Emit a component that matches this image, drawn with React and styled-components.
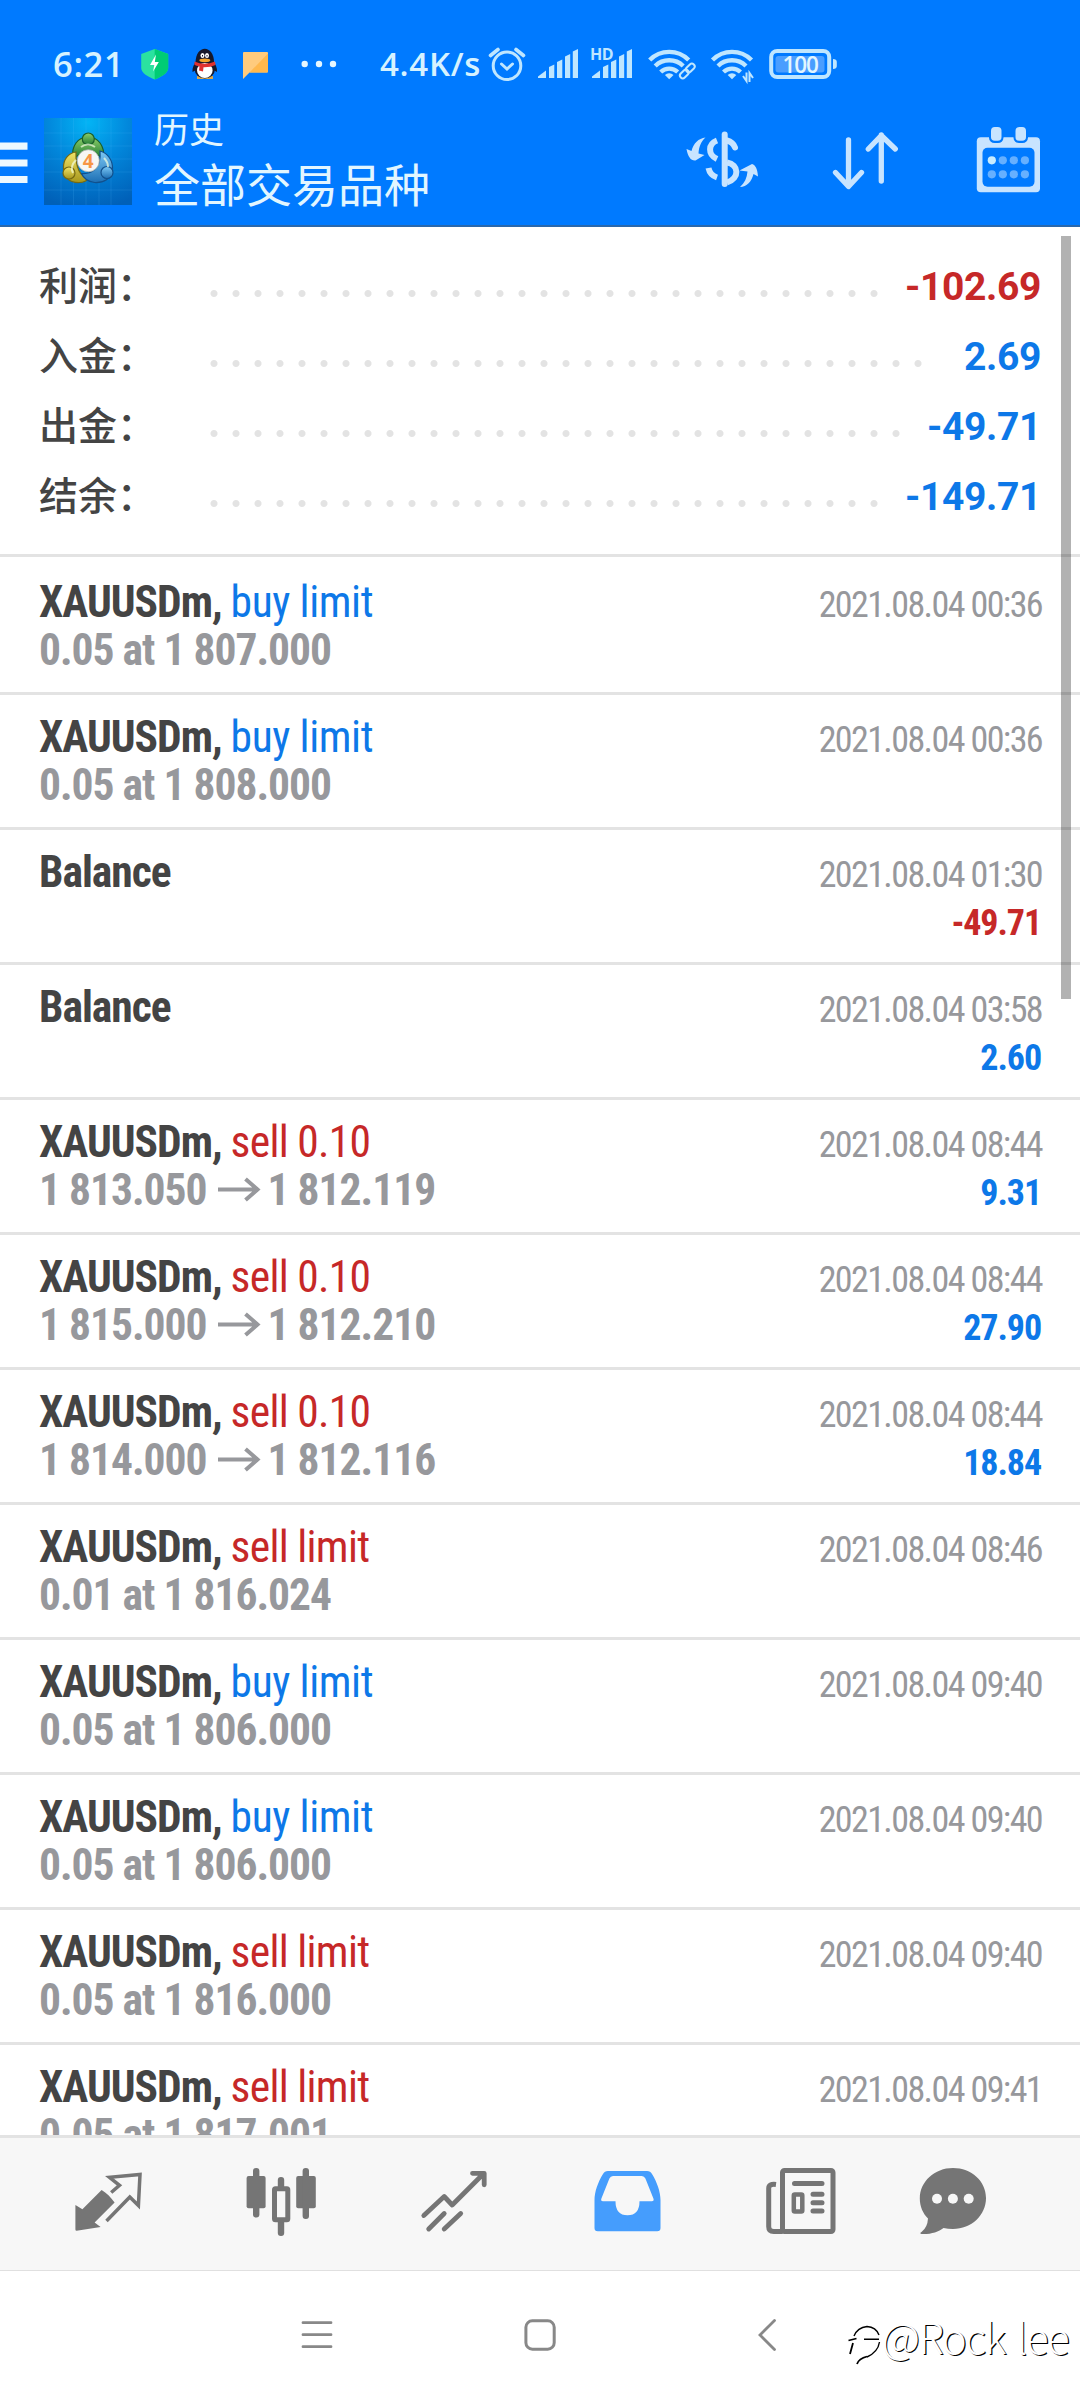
import React from 'react';
import styled, { createGlobalStyle } from 'styled-components';

const GlobalStyle = createGlobalStyle`
  body {
    margin: 0;
    background: #fff;
  }
`;

const colors = {
  blue: '#0d78e8',
  red: '#c62828',
  dark: '#444',
  gray: '#97989c',
  line: '#e3e3e3',
};

const Screen = styled.div`
  position: relative;
  display: flex;
  flex-direction: column;
  width: 1080px;
  height: 2400px;
  overflow: hidden;
  font-family: "Roboto Condensed", Roboto, "Noto Sans CJK SC", sans-serif;
  background: #fff;
`;

const Header = styled.header`
  flex: none;
  box-sizing: border-box;
  height: 227px;
  color: #e2f6ff;
  background: #007aff;
  border-bottom: 2px solid #2a68ac;
`;

const StatusBar = styled.div`
  display: flex;
  height: 100px;
  padding-left: 53px;
`;

const StatusText = styled.span`
  flex: none;
  width: ${props => props.$width}px;
  margin-left: ${props => props.$gap || 0}px;
  font-family: "Open Sans", sans-serif;
  font-size: ${props => props.$size}px;
  font-weight: 650;
  line-height: 128px;
  letter-spacing: 0.7px;
  white-space: nowrap;
  color: #d6f2ff;
`;

const Glyph = styled.svg`
  flex: none;
  display: block;
  margin-left: ${props => props.$gap || 0}px;
`;

const Toolbar = styled.div`
  display: flex;
  height: 125px;
`;

const Titles = styled.div`
  flex: 1;
  padding: 4px 0 0 22px;
  font-family: "Noto Sans CJK SC", sans-serif;
`;

const Section = styled.div`
  height: 48px;
  font-size: 35px;
  line-height: 48px;
`;

const Filter = styled.div`
  height: 62px;
  font-size: 46px;
  line-height: 60px;
`;

const Content = styled.main`
  position: relative;
  flex: none;
  height: 1908px;
  overflow: hidden;
`;

const Summary = styled.section`
  padding: 25px 39px 22px;
`;

const SummaryRow = styled.div`
  display: flex;
  height: 70px;
  line-height: 70px;
`;

const SummaryLabel = styled.span`
  width: 163.5px;
  font-family: "Noto Sans CJK SC", sans-serif;
  font-size: 39px;
  font-weight: 500;
  line-height: 62px;
  color: ${colors.dark};
`;

const Leader = styled.span`
  width: ${props => props.$dots * 22}px;
  background: radial-gradient(circle at 11px 41.5px, #e3e3e3 3px, transparent 4px) 0 0 / 22px 70px;
`;

const SummaryValue = styled.span`
  margin-left: auto;
  font-family: Roboto, sans-serif;
  font-size: 39px;
  font-weight: 700;
  letter-spacing: -0.35px;
  color: ${props => colors[props.$tone]};
`;

const List = styled.section`
  padding-top: 3px;
  border-top: 3px solid ${colors.line};
`;

const Item = styled.article`
  display: flex;
  justify-content: space-between;
  box-sizing: border-box;
  height: 135px;
  padding: 19px 38px 0 39px;
  border-bottom: 3px solid ${colors.line};
`;

const Deal = styled.div`
  font-size: 43.5px;
  font-weight: 700;
  line-height: 48px;
  letter-spacing: -1px;
  white-space: nowrap;
  color: ${colors.dark};
`;

const Kind = styled.span`
  font-weight: 400;
  letter-spacing: ${props => (props.$tone === 'red' ? -0.7 : -0.4)}px;
  color: ${props => colors[props.$tone]};
`;

const Detail = styled.div`
  display: flex;
  height: 48px;
  color: ${colors.gray};
`;

const Result = styled.div`
  padding-top: 2px;
  font-size: 36px;
  line-height: 48px;
  text-align: right;
`;

const Time = styled.div`
  letter-spacing: -1.6px;
  color: ${colors.gray};
`;

const Profit = styled.div`
  padding-right: 1px;
  font-weight: 700;
  letter-spacing: -1.1px;
  color: ${props => colors[props.$tone]};
`;

const ScrollThumb = styled.div`
  position: absolute;
  top: 9px;
  right: 9px;
  width: 10px;
  height: 763px;
  background: rgba(0, 0, 0, 0.3);
`;

const TabBar = styled.nav`
  flex: none;
  display: flex;
  box-sizing: border-box;
  height: 136px;
  background: #f7f7f7;
  border-top: 3px solid ${colors.line};
  border-bottom: 1px solid #e0e0e0;
`;

const SystemBar = styled.footer`
  display: flex;
  height: 129px;
`;

const Watermark = styled.div`
  position: absolute;
  right: 12px;
  bottom: 34px;
  display: flex;
  align-items: center;
  font-family: "Noto Sans CJK SC", sans-serif;
  font-size: 42px;
  font-weight: 300;
  line-height: 60px;
  letter-spacing: -1.6px;
  word-spacing: 4px;
  white-space: nowrap;
  color: #fff;
  text-shadow: 1.2px 1px 0 #000;
`;

const summary = [
  { label: '利润：', value: '-102.69', tone: 'red', dots: 31 },
  { label: '入金：', value: '2.69', tone: 'blue', dots: 33 },
  { label: '出金：', value: '-49.71', tone: 'blue', dots: 32 },
  { label: '结余：', value: '-149.71', tone: 'blue', dots: 31 },
];

const deals = [
  { kind: 'buy limit', tone: 'blue', detail: '0.05 at 1 807.000', time: '00:36' },
  { kind: 'buy limit', tone: 'blue', detail: '0.05 at 1 808.000', time: '00:36' },
  { time: '01:30', profit: '-49.71' },
  { time: '03:58', profit: '2.60' },
  { kind: 'sell 0.10', tone: 'red', detail: '1 813.050', close: '1 812.119', time: '08:44', profit: '9.31' },
  { kind: 'sell 0.10', tone: 'red', detail: '1 815.000', close: '1 812.210', time: '08:44', profit: '27.90' },
  { kind: 'sell 0.10', tone: 'red', detail: '1 814.000', close: '1 812.116', time: '08:44', profit: '18.84' },
  { kind: 'sell limit', tone: 'red', detail: '0.01 at 1 816.024', time: '08:46' },
  { kind: 'buy limit', tone: 'blue', detail: '0.05 at 1 806.000', time: '09:40' },
  { kind: 'buy limit', tone: 'blue', detail: '0.05 at 1 806.000', time: '09:40' },
  { kind: 'sell limit', tone: 'red', detail: '0.05 at 1 816.000', time: '09:40' },
  { kind: 'sell limit', tone: 'red', detail: '0.05 at 1 817.001', time: '09:41' },
];

// Every icon is as tall as its bar; x is the left edge of its viewBox.
const Icon = ({ x, y, width, height, gap, children }) => (
  <Glyph $gap={gap} width={width} height={height} viewBox={`${x} ${y} ${width} ${height}`} fill="none">
    {children}
  </Glyph>
);

const StatusIcon = props => <Icon y={0} height={100} {...props} />;
const ToolIcon = props => <Icon y={100} height={125} {...props} />;
const TabIcon = props => <Icon y={2138} height={132} {...props} />;
const SystemIcon = props => <Icon y={2271} height={129} {...props} />;

const Wifi = ({ cx }) => (
  <g stroke="#bfe6ff" strokeWidth="4.4">
    <path d={`M${cx - 19.5} 60a27.5 27.5 0 0 1 39 0`} />
    <path d={`M${cx - 14} 66a20 20 0 0 1 28 0`} />
    <path d={`M${cx - 8.5} 72a12.5 12.5 0 0 1 17 0`} />
    <path d={`M${cx} 79.3l-4.3-4.3a6.2 6.2 0 0 1 8.6 0z`} fill="#bfe6ff" stroke="none" />
  </g>
);

const Bars = ({ x }) => (
  <g fill="#bfe6ff">
    <path d={`M${x} 78v-1.5l8-6v7.5z`} />
    <path d={`M${x + 11} 78v-11l5.3-2.6v13.6z`} />
    <path d={`M${x + 19} 78v-16l5.3-2.6v18.6z`} />
    <path d={`M${x + 27} 78v-21.5l5.2-2.6v24.1z`} />
    <path d={`M${x + 34.8} 78v-26.5l5.2-2.6v29.1z`} />
  </g>
);

const StatusIcons = () => (
  <>
    <StatusIcon x={141} width={28}>
      <path d="M154.7 49l13.5 5v14c0 5-7 9-13.5 11.5-6.5-2.5-13.5-6.5-13.5-11.5V54z" fill="#2be2a0" />
      <path d="M154.7 49l13.5 5v14c0 5-7 9-13.5 11.5z" fill="#00cc74" />
      <path d="M156 54.5l-6 10.5h4.3l-1.2 6.5 5.700-9.5h-4z" fill="#fff" />
    </StatusIcon>
    <StatusIcon x={192} width={26} gap={23}>
      <path d="M197 76h16v3h-16z" fill="#d9a64b" />
      <path d="M197 60c-3 4-5 8-4.5 12l3.5-2zm15.5 0c3 4 5 8 4.5 12l-3.5-2z" fill="#16182b" />
      <ellipse cx="204.8" cy="70" rx="10" ry="8.5" fill="#16182b" />
      <ellipse cx="204.8" cy="70.5" rx="7.8" ry="7.5" fill="#fff" />
      <path d="M195.5 63c0-19 18.6-19 18.6 0z" fill="#16182b" />
      <ellipse cx="202.5" cy="55.5" rx="2" ry="2.6" fill="#fff" />
      <ellipse cx="207" cy="55.5" rx="2" ry="2.6" fill="#fff" />
      <path d="M202.5 55v1.5M207 55v1.5" stroke="#16182b" strokeWidth="1" />
      <ellipse cx="204.8" cy="60.3" rx="5.5" ry="1.9" fill="#f2a32a" />
      <path d="M194.5 61.5q10 4.5 20.5 0l.5 3.5q-5 2.5-12 2.3l-.5 4.2-4-1 .5-4-5-1.5z" fill="#e0312f" />
    </StatusIcon>
    <StatusIcon x={242} width={27} gap={24}>
      <path d="M243 53q0-1 1-1h23q1 0 1 1v18.5q0 1-1 1h-17.5l-6.5 6.5z" fill="#ffcb7d" />
      <path d="M268 53.5v18q0 1-1 1h-17.5z" fill="#ffb84d" />
    </StatusIcon>
    <StatusIcon x={301} width={36} gap={32}>
      <g fill="#e6f7ff">
        <circle cx="304.7" cy="64" r="3.2" />
        <circle cx="319" cy="64" r="3.2" />
        <circle cx="333" cy="64" r="3.2" />
      </g>
    </StatusIcon>
  </>
);

const NetworkIcons = () => (
  <>
    <StatusIcon x={488} width={38}>
      <g stroke="#bfe6ff" strokeWidth="3" strokeLinecap="round">
        <circle cx="507" cy="65.7" r="13.8" />
        <path d="M501.5 64l5.5 5 5.5-5" />
        <path d="M490.5 55.5l7.5-6M523.5 55.5l-7.5-6" strokeWidth="3.6" />
      </g>
    </StatusIcon>
    <StatusIcon x={538} width={41} gap={12}>
      <Bars x={538} />
    </StatusIcon>
    <StatusIcon x={589} width={44} gap={10}>
      <Bars x={592} />
      <text x="590" y="59.5" fill="#bfe6ff" fontFamily="Open Sans, sans-serif" fontSize="16" fontWeight="700" letterSpacing="-0.5">HD</text>
    </StatusIcon>
    <StatusIcon x={647} width={50} gap={14}>
      <Wifi cx={669.2} />
      <g stroke="#007aff" strokeWidth="5">
        <rect x="686" y="64.5" width="6.5" height="10" rx="3.2" transform="rotate(45 689 69.5)" />
      </g>
      <g stroke="#bfe6ff" strokeWidth="2">
        <rect x="687.5" y="63" width="5.6" height="10" rx="2.8" transform="rotate(45 690.3 68)" />
        <rect x="681.5" y="69" width="5.6" height="10" rx="2.8" transform="rotate(45 684.3 74)" />
      </g>
    </StatusIcon>
    <StatusIcon x={710} width={45} gap={13}>
      <Wifi cx={732} />
      <path d="M743 76l3.5 5V72.5M753 78l-3.5-5V82" stroke="#bfe6ff" strokeWidth="2" />
    </StatusIcon>
    <StatusIcon x={768} width={70} gap={13}>
      <rect x="775.5" y="56" width="49" height="16.5" rx="3" fill="#4a9eff" />
      <rect x="771.2" y="51" width="58" height="26" rx="6" stroke="#bfe6ff" strokeWidth="4" />
      <path d="M833 59q3.8 0 3.8 3v4q0 3-3.8 3z" fill="#bfe6ff" />
      <text x="800.2" y="73" fill="#e2f6ff" textAnchor="middle" fontFamily="Open Sans, sans-serif" fontSize="22.5" fontWeight="600" letterSpacing="-1">100</text>
    </StatusIcon>
  </>
);

const Logo = () => (
  <ToolIcon x={44} width={88} gap={16}>
    <defs>
      <radialGradient id="sky" cx="0.5" cy="0.05" r="1">
        <stop offset="0" stopColor="#03b4f5" />
        <stop offset="0.45" stopColor="#0288dc" />
        <stop offset="1" stopColor="#0060b8" />
      </radialGradient>
      <linearGradient id="green" x1="0" y1="0" x2="0" y2="1">
        <stop offset="0" stopColor="#8fd06a" />
        <stop offset="1" stopColor="#1f7a34" />
      </linearGradient>
      <linearGradient id="yellow" x1="0" y1="0" x2="0" y2="1">
        <stop offset="0" stopColor="#f0e467" />
        <stop offset="1" stopColor="#a8971c" />
      </linearGradient>
      <linearGradient id="azure" x1="0" y1="0" x2="0" y2="1">
        <stop offset="0" stopColor="#7cc8f5" />
        <stop offset="1" stopColor="#1d6fb4" />
      </linearGradient>
    </defs>
    <rect x="44" y="118" width="88" height="87" fill="url(#sky)" />
    <path d="M61 118v87M73.5 118v87M86 118v87M99 118v87M111 118v87M44 133h88M44 146h88M44 159h88M44 172h88M44 190h88" stroke="#5cc4ff" strokeOpacity="0.15" />
    <g strokeWidth="1.2">
      <path d="M73 158c-2-12 5-21 15-21s17 9 15.5 21l-6-3c-4-5-14-5-18 0z" fill="url(#green)" stroke="#1b5e2a" />
      <path d="M76 152c-8 1-13 8-12.5 16 0 10 7 15 16 14.5 4 0 8-2 9-4-8-2-13-10-12.5-26.5z" fill="url(#yellow)" stroke="#776a13" />
      <path d="M100 151c8 2 13 10 12.5 18-1 10-9 14-18 13.5-6-1-11-4-13-9 10 1 20-5 18.5-22.5z" fill="url(#azure)" stroke="#12508c" />
      <circle cx="88.3" cy="139" r="6" fill="url(#green)" stroke="#1b5e2a" />
      <circle cx="69" cy="173" r="6" fill="url(#yellow)" stroke="#776a13" />
      <circle cx="107" cy="172.5" r="6" fill="url(#azure)" stroke="#12508c" />
    </g>
    <path d="M76 160c-4 4-5 9-3 13M81 147q7-5 14 0M104 158q4 4 4 9" stroke="#f4ffe0" strokeOpacity="0.7" strokeWidth="2" />
    <circle cx="88.3" cy="160.7" r="11" fill="#f7f7f5" stroke="#b0b5b0" strokeWidth="0.8" />
    <text x="88.3" y="167.5" fill="#f79646" textAnchor="middle" fontFamily="Open Sans, sans-serif" fontSize="19" fontWeight="700">4</text>
  </ToolIcon>
);

const ToolbarIcons = () => (
  <>
    <ToolIcon x={684} width={76}>
      <path d="M724.7 134.5v49.5" stroke="#c8e4ff" strokeWidth="6" strokeLinecap="round" />
      <g stroke="#c8e4ff" strokeWidth="6">
        <path d="M717 140.5c-9 3.5-9.5 14 0 18.5" />
        <path d="M708.5 168c1 5 4 8 8.5 9.5" />
        <path d="M727 140.5c4 1 6.5 3 8 7" strokeLinecap="round" />
        <path d="M727 162.5c12 2 13 16 0 20" />
      </g>
      <path d="M705.5 137.5c-4.5 4-6.5 9-7 16l6 1.5-9 5.5c-4.5.5-7.5-3.5-9-11.5l5 2c2-8 7-12.5 14-13.5z" fill="#c8e4ff" />
      <path d="M740 187c4.5-4 7-9 7.5-15.5l-8-1 12.5-6.5c3.5 1 5.5 5 6 12.5l-4.5-2.5c-2 8-6.5 12.5-13.5 13z" fill="#c8e4ff" />
    </ToolIcon>
    <ToolIcon x={830} width={71} gap={70}>
      <path d="M848.5 140v46M835.5 172.5l13 14 13-14M881.3 181v-46M868.3 149l13-13.5 14 13.5" stroke="#c8e4ff" strokeWidth="5.3" strokeLinecap="round" strokeLinejoin="round" />
    </ToolIcon>
    <ToolIcon x={975} width={105} gap={74}>
      <rect x="976.8" y="137.3" width="63.2" height="55" rx="4" fill="#c8e4ff" />
      <rect x="982.5" y="147.8" width="52" height="39" rx="5" fill="#007aff" />
      <rect x="989" y="125" width="14.5" height="18" rx="5.5" fill="#007aff" />
      <rect x="1013.5" y="125" width="14.5" height="18" rx="5.5" fill="#007aff" />
      <rect x="991" y="127" width="10.5" height="13.8" rx="3.8" fill="#c8e4ff" />
      <rect x="1015.5" y="127" width="10.5" height="13.8" rx="3.8" fill="#c8e4ff" />
      {[160.3, 174.3].map(cy => [991.8, 1002.8, 1013.8, 1024.9].map(cx => (
        <circle key={`${cx}-${cy}`} cx={cx} cy={cy} r="4.1" fill={cx < 1000 && cy < 170 ? '#c8ecff' : '#66b0ff'} />
      )))}
    </ToolIcon>
  </>
);

const Arrow = () => (
  <Glyph $gap={11} width="50" height="48" viewBox="0 0 50 48" fill="none">
    <path d="M0 22.5h40M27.5 12l12 10.5-12 10.5" stroke="#97989c" strokeWidth="4" />
  </Glyph>
);

const Tabs = () => (
  <TabBar>
    <TabIcon x={74} width={68} gap={74}>
      <path d="M75.4 2205l7 4.3 19.2-19.3c5 3 9 7 13 12.5l-20 20 6 4.5-24 3.8q-1.2 0-1.2-1.2z" fill="#757575" />
      <path d="M111.2 2192.5l8.3-7.2-10-8 30.5-2.8-1.6 31-8.6-8.5-23.3 24" stroke="#757575" strokeWidth="3.5" />
    </TabIcon>
    <TabIcon x={246} width={71} gap={104}>
      <g fill="#757575">
        <rect x="246.6" y="2176" width="19" height="32.3" rx="2" />
        <rect x="253" y="2168" width="6.4" height="49.5" rx="3" />
        <rect x="296.2" y="2176" width="19.6" height="32.3" rx="2" />
        <rect x="302.6" y="2168" width="6.4" height="51" rx="3" />
        <rect x="277.8" y="2177" width="6.4" height="16" rx="3" />
        <rect x="277.8" y="2216" width="6.4" height="20" rx="3" />
      </g>
      <rect x="274.5" y="2188.7" width="13.3" height="31" rx="1" fill="#f7f7f7" stroke="#757575" strokeWidth="5" />
    </TabIcon>
    <TabIcon x={420} width={70} gap={103}>
      <path d="M423.8 2215.5l20.4-19 8 8.5 31-31M472.5 2173.3h11.7v11.5M428.7 2229l15.5-15.5M444.2 2229l16.5-15.5" stroke="#757575" strokeWidth="4.8" strokeLinecap="round" strokeLinejoin="round" />
    </TabIcon>
    <TabIcon x={594} width={67} gap={104}>
      <path
        d="M608 2171h39q3.5 0 5 3c5 8 8.5 18 8.5 26v28q0 3.3-3.3 3.3h-59.4q-3.3 0-3.3-3.3v-28c0-8 3.5-18 8.5-26q1.5-3 5-3zM613 2176q-2.5 0-3.6 2.5l-8 20q-1 2.7 1.6 2.7h12.5q0 14 12 14t12-14h12.3q2.6 0 1.6-2.7l-8-20q-1.1-2.5-3.6-2.5z"
        fill="#459dfd"
        fillRule="evenodd"
      />
    </TabIcon>
    <TabIcon x={766} width={70} gap={105}>
      <rect x="782.5" y="2170.5" width="50.5" height="61" rx="2" stroke="#757575" strokeWidth="5" />
      <path d="M776 2184.5q-7.3-1-7.3 4v38q0 5 5 5h9" stroke="#757575" strokeWidth="5" />
      <path d="M794.5 2183.5h27.5M813 2194.3h9M813 2202.7h9M813 2211h9" stroke="#757575" strokeWidth="5" strokeLinecap="round" />
      <rect x="793.8" y="2194.5" width="8.5" height="17" rx="1" stroke="#757575" strokeWidth="4.5" />
    </TabIcon>
    <TabIcon x={919} width={68} gap={83}>
      <path d="M953 2168c18.5 0 33 13 33 30s-14.5 31-33 31q-5 0-9.5-1c-5 4-13 6.5-22 6-1.5-.2-1.5-1.2 0-2q6-4.5 6.5-13.5c-5-5-8.2-12-8.2-20 0-17 14.7-30.5 33.2-30.5z" fill="#757575" />
      <circle cx="937" cy="2198.8" r="5" fill="#f7f7f7" />
      <circle cx="952.9" cy="2198.8" r="5" fill="#f7f7f7" />
      <circle cx="968.7" cy="2198.8" r="5" fill="#f7f7f7" />
    </TabIcon>
  </TabBar>
);

const SystemButtons = () => (
  <SystemBar>
    <SystemIcon x={300} width={34} gap={300}>
      <path d="M303 2322.7h28M303 2334.7h28M303 2346.7h28" stroke="#888" strokeWidth="2.8" strokeLinecap="round" />
    </SystemIcon>
    <SystemIcon x={523} width={34} gap={189}>
      <rect x="525.9" y="2320.8" width="28.3" height="28.4" rx="6.5" stroke="#888" strokeWidth="3" />
    </SystemIcon>
    <SystemIcon x={757} width={21} gap={200}>
      <path d="M774.5 2320.5l-14.5 14.5 14.5 14.5" stroke="#888" strokeWidth="2.8" strokeLinecap="round" />
    </SystemIcon>
  </SystemBar>
);

const App = () => (
  <Screen>
    <GlobalStyle />
    <Header>
      <StatusBar>
        <StatusText $width={88} $size={34.5}>6:21</StatusText>
        <StatusIcons />
        <StatusText $width={108} $size={33} $gap={43}>4.4K/s</StatusText>
        <NetworkIcons />
      </StatusBar>
      <Toolbar>
        <ToolIcon x={0} width={28}>
          <path d="M0 146.2h27.5M0 163h27.5M0 179.5h27.5" stroke="#ecf8ff" strokeWidth="7.2" />
        </ToolIcon>
        <Logo />
        <Titles>
          <Section>历史</Section>
          <Filter>全部交易品种</Filter>
        </Titles>
        <ToolbarIcons />
      </Toolbar>
    </Header>
    <Content>
      <Summary>
        {summary.map(row => (
          <SummaryRow key={row.label}>
            <SummaryLabel>{row.label}</SummaryLabel>
            <Leader $dots={row.dots} />
            <SummaryValue $tone={row.tone}>{row.value}</SummaryValue>
          </SummaryRow>
        ))}
      </Summary>
      <List>
        {deals.map((deal, index) => (
          <Item key={index}>
            <Deal>
              {deal.kind ? 'XAUUSDm, ' : 'Balance'}
              {deal.kind && <Kind $tone={deal.tone}>{deal.kind}</Kind>}
              <Detail>
                {deal.detail}
                {deal.close && <Arrow />}
                {deal.close}
              </Detail>
            </Deal>
            <Result>
              <Time>2021.08.04 {deal.time}</Time>
              {deal.profit && <Profit $tone={deal.profit < 0 ? 'red' : 'blue'}>{deal.profit}</Profit>}
            </Result>
          </Item>
        ))}
      </List>
      <ScrollThumb />
    </Content>
    <Tabs />
    <SystemButtons />
    <Watermark>
      <Glyph width="36" height="60" viewBox="16 15 36 60" fill="none">
        <path d="M24 45Q27.5 36.5 37 35.5 46 36 49 44M34 48.2h15M49.5 51Q48 61 37 66" stroke="#000" strokeWidth="1.4" />
        <path d="M18.5 49.5l8-2M23 52l-3 11M37 65.5q-8 2-10 7.5" stroke="#000" strokeWidth="1.8" />
      </Glyph>
      @Rock lee
    </Watermark>
  </Screen>
);

export default App;
